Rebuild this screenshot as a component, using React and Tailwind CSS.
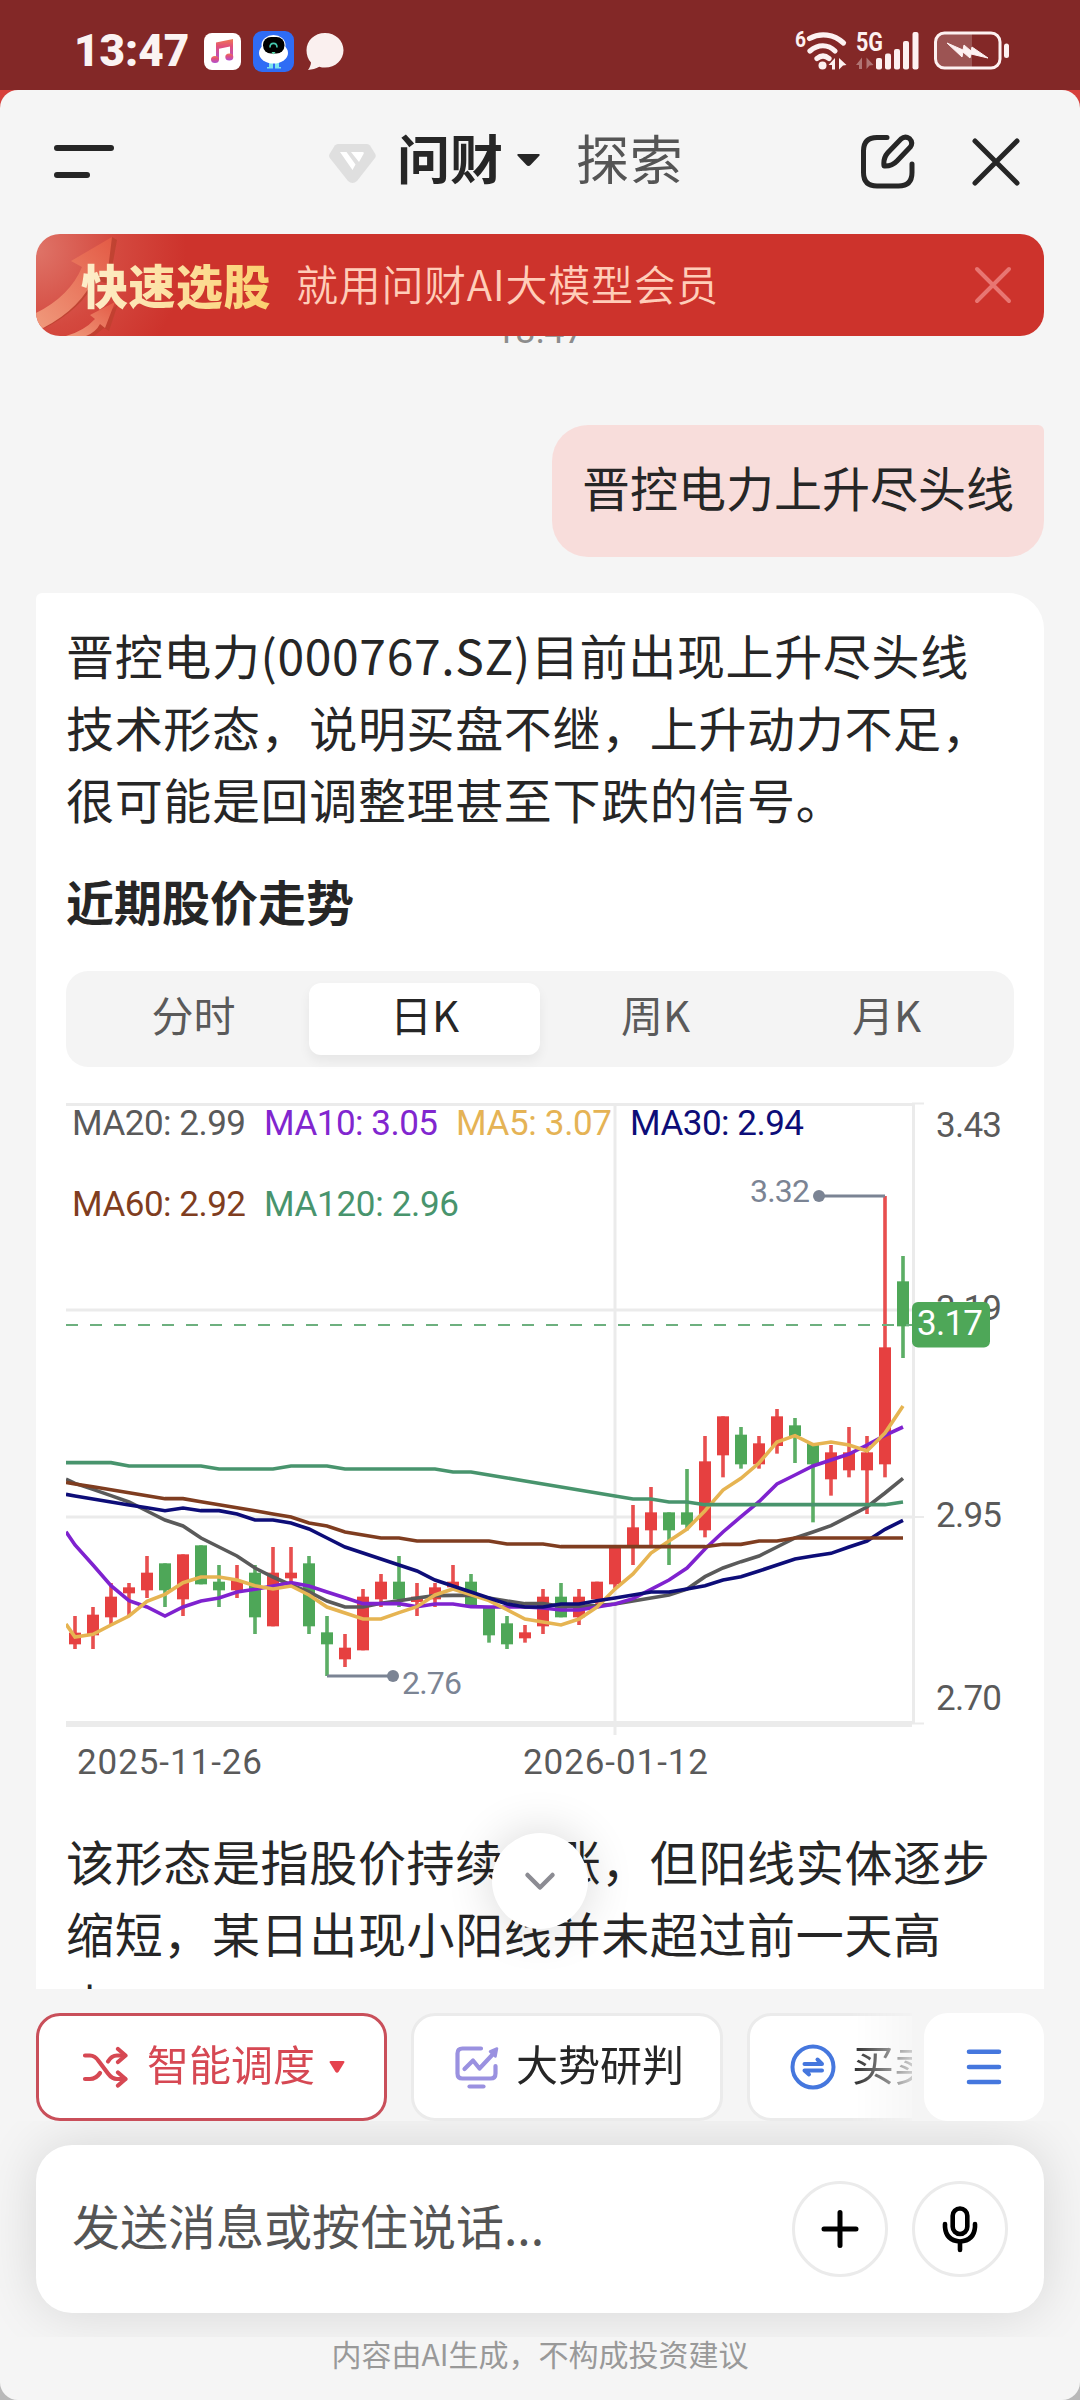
import React from "react";

const RED = "#e64040";
const GREEN = "#4ea758";

// [high, body top, body bottom, low, up]
const candles = [
  [648, 698, 733, 747, 1], [621, 644, 706, 747, 1], [549, 590, 652, 675, 1], [549, 562, 580, 648, 1],
  [468, 518, 571, 594, 1], [490, 490, 571, 621, 0], [463, 463, 598, 648, 1], [436, 436, 553, 553, 0],
  [495, 545, 571, 621, 0], [495, 540, 571, 594, 1], [495, 518, 652, 702, 0], [441, 518, 679, 679, 1],
  [441, 518, 535, 548, 1], [468, 490, 679, 702, 0], [648, 697, 733, 828, 0], [702, 743, 778, 801, 1],
  [567, 590, 751, 751, 1], [522, 545, 598, 621, 1], [468, 545, 598, 621, 0], [549, 590, 606, 648, 1],
  [549, 562, 598, 621, 1], [495, 545, 562, 562, 1], [522, 545, 616, 616, 0], [624, 624, 706, 728, 0],
  [648, 670, 733, 747, 0], [675, 697, 715, 728, 1], [567, 590, 679, 702, 1], [549, 590, 652, 652, 0],
  [567, 590, 652, 675, 1], [545, 545, 598, 625, 1], [436, 436, 553, 565, 1], [315, 382, 440, 495, 1],
  [261, 337, 391, 441, 1], [337, 337, 391, 495, 0], [207, 337, 374, 391, 0], [108, 184, 391, 412, 1],
  [49, 49, 166, 232, 1], [81, 104, 193, 206, 0], [108, 130, 193, 206, 1], [27, 49, 138, 161, 1],
  [54, 76, 108, 189, 0], [130, 130, 193, 367, 0], [135, 157, 238, 287, 1], [81, 157, 211, 232, 1],
  [108, 157, 211, 342, 1], [-612, -158, 193, 232, 1], [-432, -356, -221, -126, 0],
];

// the first value of every line sits on the left edge of the plot
const averages = [
  { color: "#5a5a5a", values: [237, 250, 268, 287, 306, 333, 360, 378, 414, 441, 468, 504, 531, 555, 576, 603, 621, 621, 610, 602, 594, 587, 586, 586, 594, 603, 611, 611, 619, 619, 617, 612, 603, 594, 585, 567, 530, 504, 485, 468, 441, 414, 396, 377, 349, 321, 279, 235] },
  { color: "#7f22cf", values: [395, 435, 495, 557, 602, 621, 648, 621, 603, 594, 576, 568, 558, 548, 558, 576, 593, 611, 611, 611, 620, 612, 612, 620, 621, 621, 621, 624, 630, 630, 621, 612, 596, 568, 540, 504, 447, 396, 350, 305, 252, 225, 198, 180, 162, 135, 106, 81] },
  { color: "#e6b452", values: [672, 711, 703, 675, 648, 604, 583, 548, 531, 531, 540, 557, 567, 558, 585, 621, 639, 657, 657, 638, 620, 585, 567, 584, 602, 629, 657, 666, 675, 657, 621, 567, 522, 459, 423, 387, 332, 270, 235, 189, 126, 107, 134, 126, 135, 153, 99, 18] },
  { color: "#0d0d78", values: [283, 288, 297, 306, 315, 323, 332, 324, 332, 332, 342, 360, 360, 369, 387, 414, 441, 459, 477, 495, 513, 540, 558, 576, 594, 612, 621, 621, 612, 612, 602, 594, 585, 576, 576, 567, 557, 540, 530, 513, 495, 477, 468, 460, 441, 423, 388, 361] },
  { color: "#7f3d20", values: [247, 252, 260, 269, 278, 287, 296, 296, 305, 314, 323, 332, 342, 351, 369, 378, 396, 405, 414, 414, 423, 423, 423, 423, 423, 432, 432, 432, 440, 440, 440, 440, 440, 440, 440, 440, 440, 433, 433, 423, 423, 414, 414, 414, 414, 414, 414, 414] },
  { color: "#48946d", values: [188, 188, 188, 188, 198, 198, 198, 198, 198, 207, 207, 207, 207, 198, 198, 198, 207, 207, 207, 207, 207, 207, 216, 216, 225, 234, 243, 252, 261, 270, 279, 288, 297, 297, 306, 306, 314, 314, 314, 314, 314, 314, 314, 314, 314, 314, 314, 306] },
];

const legend = [
  { text: "MA20: 2.99", x: 8, y: 35, w: 170, color: "#5a5a5a" },
  { text: "MA10: 3.05", x: 200, y: 35, w: 170, color: "#8126cf" },
  { text: "MA5: 3.07", x: 392, y: 35, w: 152, color: "#e5b355" },
  { text: "MA30: 2.94", x: 566, y: 35, w: 170, color: "#0d0d78" },
  { text: "MA60: 2.92", x: 8, y: 116, w: 170, color: "#7f3d20" },
  { text: "MA120: 2.96", x: 200, y: 116, w: 191, color: "#48946d" },
];

const xAt = (i) => 9 + 18 * i;
const yAt = (v) => 300 + v / 3;

function KLineChart() {
  return (
    <svg width="948" height="700" viewBox="0 0 948 700" className="block shrink-0 font-['Roboto',sans-serif]">
      <g stroke="#ebebeb" strokeWidth="3" fill="none">
        <path d="M0 4.5H848M0 210H846M0 417H846M549 4V635M847.5 4V624" />
        <path d="M0 624H846" strokeWidth="6" />
        <path d="M846 3.5H858M846 417H858M846 623.5H858" strokeWidth="2" />
      </g>

      {legend.map((l) => (
        <text key={l.text} x={l.x - 2} y={l.y} textLength={l.w + 4} fontSize="35" fill={l.color}>{l.text}</text>
      ))}

      {candles.map(([high, top, bottom, low, up], i) => (
        <g key={i} fill={up ? RED : GREEN}>
          <rect x={xAt(i) - 1.8} y={yAt(high)} width="3.6" height={(low - high) / 3} opacity="0.92" />
          <rect x={xAt(i) - 6} y={yAt(top)} width="12" height={(bottom - top) / 3} />
        </g>
      ))}

      <path d="M0 225H846" stroke="#6db07f" strokeWidth="2.2" strokeDasharray="12 12" />

      {averages.map((a) => (
        <polyline
          key={a.color}
          fill="none"
          stroke={a.color}
          strokeWidth="3.6"
          points={a.values.map((v, i) => `${i === 0 ? 0 : xAt(i - 1)},${yAt(v)}`).join(" ")}
        />
      ))}

      {/* highest and lowest price */}
      <g stroke="#7b8494" strokeWidth="3" fill="none">
        <path d="M753 96H819M261 576H327" />
      </g>
      <g fill="#7b8494" fontSize="32">
        <circle cx="753" cy="96" r="6" />
        <circle cx="327" cy="576" r="6" />
        <text x="684" y="102" textLength="60">3.32</text>
        <text x="336" y="594" textLength="60">2.76</text>
      </g>

      <g fill="#5a5a5a" fontSize="35">
        <text x="870" y="37" textLength="66">3.43</text>
        <text x="870" y="220" textLength="66">3.19</text>
        <text x="870" y="427" textLength="66">2.95</text>
        <text x="870" y="610" textLength="66">2.70</text>
        <text x="11" y="674" textLength="185">2025-11-26</text>
        <text x="457" y="674" textLength="185">2026-01-12</text>
      </g>

      <rect x="846" y="202" width="78" height="45.5" rx="6" fill={GREEN} />
      <text x="851" y="235" textLength="66" fontSize="35" fill="#fff">3.17</text>
    </svg>
  );
}

function StatusBar() {
  return (
    <div className="flex h-[90px] items-start bg-[#832827] pt-[31px] text-[#fbf3f2]">
      <div className="ml-[74px] w-[130px] font-['Roboto',sans-serif] text-[44px] font-black leading-[41px]">13:47</div>
      <svg width="38" height="41" viewBox="0 0 38 41" className="shrink-0">
        <defs>
          <linearGradient id="note" x1="0" y1="0" x2="0" y2="1">
            <stop offset="0" stopColor="#ee7a52" />
            <stop offset="0.35" stopColor="#e2507a" />
            <stop offset="1" stopColor="#b04fd0" />
          </linearGradient>
        </defs>
        <rect y="2" width="37" height="37" rx="8" fill="#fff" />
        <g fill="url(#note)">
          <path d="M12 11.5 29 8v18.500h-3V15.500l-11 2.200V29h-3z" />
          <ellipse cx="11" cy="28.500" rx="4" ry="3.500" />
          <ellipse cx="25.300" cy="26" rx="4" ry="3.500" />
        </g>
      </svg>
      <svg width="41" height="41" viewBox="0 0 41 41" className="ml-[11px] shrink-0">
        <rect width="41" height="41" rx="9" fill="#2f6cf5" />
        <path d="M16 31v5h-2v1.500h6V31zM22 31v6.500h6V36h-2v-5z" fill="#7de3ec" />
        <ellipse cx="20.500" cy="14" rx="12" ry="10" fill="#fff" />
        <ellipse cx="20.500" cy="22" rx="14.500" ry="10.500" fill="#fff" />
        <rect x="10" y="6" width="21.500" height="16.500" rx="8" fill="#000" />
        <path d="M17 16.500c0-5.500 7-5.500 7 0" fill="none" stroke="#45c8ae" strokeWidth="1.600" />
        <path d="M18.500 21h4l-2 2.500z" fill="#5de0b0" />
      </svg>
      <svg width="38" height="41" viewBox="0 0 38 41" className="ml-[12px] shrink-0">
        <path d="M19 2c10.500 0 18.500 7.600 18.500 17.300S29.500 36.600 19 36.600c-2 0-4-.3-5.800-.9C10 37.500 6 38.500 2 39c1.800-2.500 2.800-5 3-7.500C2 28.400.5 24.200.5 19.300.5 9.600 8.500 2 19 2z" fill="#faf0ef" />
      </svg>

      <svg width="216" height="41" viewBox="0 0 216 41" className="ml-[451px] shrink-0" fill="#fdf1f1">
        <text x="0" y="15.500" fontSize="22" fontWeight="700" fontFamily="Roboto, sans-serif" textLength="11" lengthAdjust="spacingAndGlyphs">6</text>
        <g fill="none" stroke="#fdf1f1" strokeWidth="5.200" strokeLinecap="round">
          <path d="M14.500 7.500c11-6.200 24.500-4.500 34 4.500" />
          <path d="M15 20c8-7 18-7 25 0" />
          <path d="M22 27.500c4-3.300 8-3.300 12 0" />
        </g>
        <circle cx="27.500" cy="34.500" r="4" />
        <path d="M40 27v11.500h-3V34h-3.500zM44 38.500V27l7.500 7-3.500.5z" />
        <text x="61" y="20" fontSize="26" fontWeight="700" fontFamily="Roboto, sans-serif" textLength="27" lengthAdjust="spacingAndGlyphs">5G</text>
        <path d="M67 26.500V38h-3v-4h-3zM71.500 38V26.500l7 7.500-4 .5z" fill="#b07574" />
        <rect x="81" y="27" width="6" height="11.500" rx="2" />
        <rect x="90" y="22.500" width="6" height="16" rx="2" />
        <rect x="99" y="18" width="6" height="20.500" rx="2" />
        <rect x="108" y="10" width="6" height="28.500" rx="2" />
        <rect x="117.500" y="1" width="6" height="37.500" rx="2" />
        <path d="M148 3h29v33h-29q-8 0-8-8V11q0-8 8-8z" fill="#9c5453" />
        <rect x="140.500" y="2" width="64.500" height="35" rx="9" fill="none" stroke="#fdf1f1" strokeWidth="3" />
        <path d="m152 12 16 7 1-5 7 6 1-4 16 11-17-4-1 4-7-6-1 5z" stroke="#fdf1f1" strokeWidth="1" />
        <rect x="209" y="12.500" width="5" height="14.500" rx="2.500" />
      </svg>
    </div>
  );
}

function Header() {
  return (
    <div className="flex h-[144px] items-start pt-[42px]">
      <svg width="60" height="60" viewBox="0 0 60 60" className="ml-[54px] shrink-0" fill="#262626">
        <rect y="13" width="60" height="6" rx="3" />
        <rect y="40" width="36" height="6" rx="3" />
      </svg>
      <svg width="47" height="60" viewBox="0 0 47 60" className="ml-[215px] shrink-0">
        <path d="M9 12h29q2 0 3 1.500l5 8q1.500 2.500 0 4.500L28 49q-4.500 4-9 0L.8 26q-1.500-2 0-4.500l5-8Q7 12 9 12z" fill="#dfdfdf" />
        <path d="M11 20h6.500l9 12.500-3 5.500zM22 20h11.500q2 0 1 2l-4.500 8z" fill="#fff" />
      </svg>
      <div className="-mt-[3px] ml-[21px] w-[109px] text-[53px] font-bold leading-[56px] text-[#262626]">问财</div>
      <svg width="24" height="60" viewBox="0 0 24 60" className="ml-[11px] shrink-0">
        <path d="M1.500 22h20q2 0 .8 1.800l-8.500 9q-2.300 2.400-4.600 0L.7 23.800Q-.5 22 1.500 22z" fill="#262626" />
      </svg>
      <div className="-mt-[3px] ml-[35px] w-[284px] text-[53px] leading-[56px] tracking-[0.7px] text-[#555]">探索</div>
      <svg width="56" height="60" viewBox="0 0 56 60" className="shrink-0" fill="none" stroke="#262626" strokeWidth="5" strokeLinecap="round" strokeLinejoin="round">
        <path d="M27 5.500H17Q3.500 5.500 3.500 19v21.500Q3.500 54 17 54h21.500Q52 54 52 40.500V32" />
        <path d="M24 34q-1-8 4-13.500L41 7q4-3.500 8.500-.5 4 4 .8 8.500L37 29q-5 5.500-13 5z" />
      </svg>
      <svg width="50" height="60" viewBox="0 0 50 60" className="ml-[55px] shrink-0" stroke="#262626" strokeWidth="5" strokeLinecap="round">
        <path d="m4 9 42 42M46 9 4 51" />
      </svg>
    </div>
  );
}

function Banner() {
  return (
    <div className="relative z-10 mx-9 flex h-[102px] shrink-0 items-center overflow-hidden rounded-3xl bg-[#cd332c] bg-[radial-gradient(circle_at_0%_15%,#df7468_0px,#d4493f_80px,#cd332c_150px)]">
      <svg width="120" height="102" viewBox="0 0 120 102" className="absolute left-0 top-0">
        <defs>
          <linearGradient id="arrow" x1="0" y1="1" x2="1" y2="0">
            <stop offset="0" stopColor="#f09a7c" />
            <stop offset="1" stopColor="#e35a45" />
          </linearGradient>
        </defs>
        <path d="M76 3 81 6 73 50 60 46Q45 76 7 95L12 90z" fill="#b8402c" opacity="0.7" />
        <path d="M76 3 35 27l11 6Q34 62 0 79v12l7 3Q46 74 60 40l11 4z" fill="url(#arrow)" />
        <path d="m82 70-9 27-5-3-10 8H46z" fill="#b8402c" opacity="0.6" />
        <path d="M79 68 54 81l5 4Q48 97 30 102h20q10-4 14-12l5 4z" fill="url(#arrow)" />
      </svg>
      <div className="relative -mt-[2px] ml-[45px] w-[215px] bg-gradient-to-r from-[#fdeecb] to-[#fbd06c] to-90% bg-clip-text text-[47px] font-black leading-[60px] tracking-[0.5px] text-transparent">快速选股</div>
      <div className="-mt-[4px] text-[42px] font-[350] leading-[60px] tracking-[0.7px] text-[#ffcdb9]">就用问财AI大模型会员</div>
      <svg width="38" height="38" viewBox="0 0 38 38" className="ml-auto mr-[32px]" stroke="#e87672" strokeWidth="4" strokeLinecap="round">
        <path d="m3 3 32 32M35 3 3 35" />
      </svg>
    </div>
  );
}

function PeriodTabs() {
  const tabs = ["分时", "日K", "周K", "月K"];
  return (
    <div className="mt-[32px] flex h-24 w-[948px] rounded-[22px] bg-[#f4f4f4] p-3">
      {tabs.map((tab) => (
        <div
          key={tab}
          className={`flex-1 rounded-xl text-center text-[42px] leading-[62px] ${
            tab === "日K" ? "bg-white text-[#262626] shadow-[0_6px_12px_rgba(0,0,0,0.06)]" : "text-[#5a5a5a]"
          }`}
        >
          {tab}
        </div>
      ))}
    </div>
  );
}

function Chat() {
  return (
    <div className="relative h-[1653px] overflow-hidden">
      <div className="-mt-[29px] h-[118px] text-center font-['Roboto',sans-serif] text-[36px] leading-[48px] text-[#8c8c8c]">13:47</div>
      <div className="ml-auto mr-9 flex h-[132px] w-[492px] rounded-[36px] rounded-tr-md bg-[#f8dddb] pl-[30px] text-[48px] leading-[122px] text-[#262626]">
        晋控电力上升尽头线
      </div>
      <div className="mx-9 mt-9 h-[1500px] rounded-tl-md rounded-tr-[36px] bg-white pl-[30px] pt-[25px] text-[48px] leading-[72px] text-[#262626]">
        <div className="tracking-[0.65px]">
          晋控电力(000767.SZ)目前出现上升尽头线<br />
          技术形态，说明买盘不继，上升动力不足，<br />
          很可能是回调整理甚至下跌的信号。
        </div>
        <div className="mt-[33px] h-[72px] font-bold leading-[66px]">近期股价走势</div>
        <PeriodTabs />
        <div className="mt-[33px]">
          <KLineChart />
        </div>
        <div className="mt-[24px] tracking-[0.65px]">
          该形态是指股价持续上涨，但阳线实体逐步<br />
          缩短，某日出现小阳线并未超过前一天高<br />
          点，
        </div>
      </div>

      {/* scroll to bottom */}
      <div className="absolute left-[492px] top-[1497px] flex h-24 w-24 items-center justify-center rounded-full bg-white shadow-[0_0_48px_rgba(0,0,0,0.16)]">
        <svg width="34" height="22" viewBox="0 0 34 22" fill="none" stroke="#8c8c93" strokeWidth="4.500" strokeLinecap="round" strokeLinejoin="round">
          <path d="m4.500 5 12.500 12.500L29.500 5" />
        </svg>
      </div>
    </div>
  );
}

function QuickActions() {
  return (
    <div className="flex h-[132px] items-end px-9 text-[42px]">
      <div className="flex w-[876px] shrink-0 gap-6 overflow-hidden [mask-image:linear-gradient(to_right,#000_815px,rgba(0,0,0,0.2)_876px)]">
        <div className="flex h-[108px] w-[351px] shrink-0 items-center rounded-3xl border-3 border-[#c94f5a] bg-white pl-[43px] text-[#d64853]">
          <svg width="46" height="42" viewBox="0 0 46 42" fill="none" stroke="#d64853" strokeWidth="4.200" strokeLinecap="round" strokeLinejoin="round">
            <path d="M3 9.500h5q5 0 9 6l9 12q4 5.500 9 5.500h8M3 33h5q6 0 10-6M26 15.500q3.500-6 9-6h8" />
            <path d="m36 3 7.500 6.500L36 16M36 26.500l7.500 6.500-7.500 6.500" />
          </svg>
          <div className="ml-[19px] h-[100px] leading-[91px]">智能调度</div>
          <svg width="16" height="14" viewBox="0 0 16 14" className="ml-[14px]">
            <path d="M1.500 1h13q1.500 0 .8 1.500l-5.500 9q-1.800 2.500-3.600 0l-5.500-9Q0 1 1.500 1z" fill="#e5434e" />
          </svg>
        </div>
        <div className="flex h-[108px] w-[312px] shrink-0 items-center rounded-3xl border-3 border-[#ebebeb] bg-white pl-[40px] text-[#262626]">
          <svg width="46" height="44" viewBox="0 0 46 44" fill="none" stroke="#9a91e0" strokeWidth="4.200" strokeLinecap="round" strokeLinejoin="round">
            <path d="M27 3.500H8.500Q3.500 3.500 3.500 8.500v20Q3.500 33.500 8.500 33.500h28q5 0 5-5V21" />
            <path d="M10.500 24 19 15.500l6.500 8L40 8" />
            <path d="m36 6.500 7-3-1.500 8z" strokeWidth="2.500" fill="#9a91e0" />
            <path d="M15.500 41.500h14" />
          </svg>
          <div className="ml-[16px] h-[100px] leading-[91px]">大势研判</div>
        </div>
        <div className="flex h-[108px] w-[312px] shrink-0 items-center rounded-3xl border-3 border-[#ebebeb] bg-white pl-[39px] text-[#262626]">
          <svg width="48" height="48" viewBox="0 0 48 48" fill="none" stroke="#4577de" strokeWidth="4" strokeLinecap="round">
            <circle cx="24" cy="24" r="20.500" />
            <path d="M15.500 21h17.500l-4.500-4.500M33 27.500H15.500l4.500 4" strokeLinejoin="round" />
          </svg>
          <div className="ml-[15px] h-[100px] leading-[91px]">买卖</div>
        </div>
      </div>
      <div className="ml-3 flex h-[108px] w-[120px] items-center justify-center rounded-3xl bg-white">
        <svg width="36" height="38" viewBox="0 0 36 38" stroke="#4577de" strokeWidth="4.600" strokeLinecap="round">
          <path d="M3 3.700h30M3 19h30M3 34h30" />
        </svg>
      </div>
    </div>
  );
}

function InputBar() {
  return (
    <div className="h-[216px] overflow-hidden px-9 py-6">
      <div className="flex h-[168px] items-center rounded-[36px] bg-white pl-[36px] pr-[36px] shadow-[0_0_54px_rgba(0,0,0,0.13)]">
        <div className="h-[84px] flex-1 text-[48px] leading-[74px] text-[#555]">发送消息或按住说话...</div>
        <div className="flex h-24 w-24 items-center justify-center rounded-full border-3 border-[#ebebeb]">
          <svg width="40" height="40" viewBox="0 0 40 40" stroke="#000" strokeWidth="5" strokeLinecap="round">
            <path d="M20 3.500v33M4 20h32" />
          </svg>
        </div>
        <div className="ml-6 flex h-24 w-24 items-center justify-center rounded-full border-3 border-[#ebebeb]">
          <svg width="40" height="48" viewBox="0 0 40 48" fill="none" stroke="#000" strokeWidth="4.600" strokeLinecap="round">
            <rect x="12.700" y="3.500" width="14.600" height="25.500" rx="7.300" />
            <path d="M5 19v3q1 13.500 15 14.500 14-1 15-14.500v-3M20 37v8" />
          </svg>
        </div>
      </div>
    </div>
  );
}

export default function App() {
  return (
    <div className="flex h-[2400px] w-[1080px] flex-col overflow-hidden bg-[#b9b9b9] font-['Noto_Sans_CJK_SC',sans-serif]">
      <StatusBar />
      <div className="bg-[linear-gradient(#d63f3b_0px,#d63f3b_30px,#b9b9b9_31px)]">
        <div className="h-[2310px] overflow-hidden rounded-[18px] bg-[#f5f5f5]">
          <Header />
          <Banner />
          <Chat />
          <QuickActions />
          <InputBar />
          <div className="text-center text-[30px] leading-[32px] text-[#999]">内容由AI生成，不构成投资建议</div>
        </div>
      </div>
    </div>
  );
}
